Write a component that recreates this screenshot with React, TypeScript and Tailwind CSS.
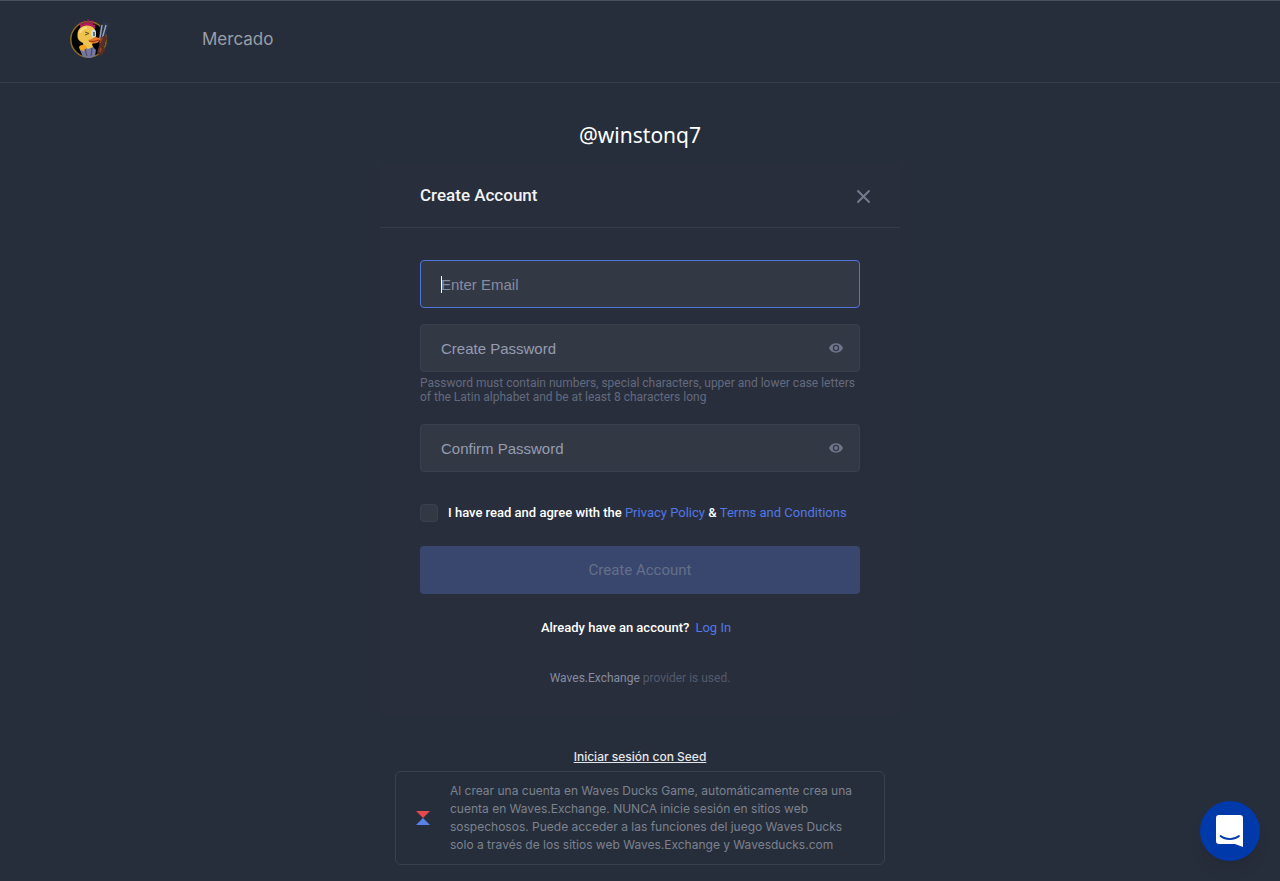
import React, { useState } from 'react';

type PasswordFieldProps = {
  label: string;
  value: string;
  onChange: (value: string) => void;
};

function DuckLogo() {
  return (
    <svg width="44" height="44" viewBox="0 0 44 44" aria-hidden="true">
      <circle cx="20.500" cy="21.500" r="17.700" fill="#020304" stroke="#8a6d20" strokeWidth="1.500" />
      <path d="M13 13L11.500 4l3.500 2.500L16 2l2.500 3.500L20 .5l2 5L25 2l.5 5 2-1-1 6z" fill="#b01c5c" />
      <path d="M32 7l3-2 1-2 2 2 4 0-2 5-4 11-5 1z" fill="#2c3547" />
      <path d="M34 7l-2 13M38 7l-4 14" stroke="#97a5bb" strokeWidth="1.400" />
      <path d="M32 20l6-3 1 4-3 6 1 6-4 5-4-3 2-7z" fill="#5c2d24" />
      <path d="M34 20l-2 5M33 30l-1 4" stroke="#94492f" strokeWidth="1.500" />
      <path d="M9.500 17c0-6 4-9.500 9.500-9.500 6 0 9 4 9 8.500 0 5-1 8-4 10l2 6-10 1-1-8c-4-2-5.500-4-5.500-7z" fill="#eec34f" />
      <path d="M12 15c1-3.500 3-5 7-5.500" fill="none" stroke="#f8dd80" strokeWidth="2" />
      <path d="M12 32l4-3 4 2 5-2 3 3-1 6-5 2-7-1z" fill="#7677a0" />
      <path d="M11 29c2-3 6-3 8 0l-3 4-4-1z" fill="#f3a51f" />
      <path d="M17 31l2 7M24 30l-1 8" stroke="#424564" strokeWidth="1" />
      <ellipse cx="25.500" cy="15.500" rx="2.400" ry="4" fill="#cfe0dc" />
      <path d="M26 14v4" stroke="#15302c" strokeWidth="1.200" />
      <path d="M17 14l4 1.500-4 1.500" fill="none" stroke="#6e5117" strokeWidth="1" />
      <path d="M20 22c4 0 5-3 8-3l5 1.500-3 4c-4 1.500-7 1.500-10-2.500z" fill="#e8742a" />
      <path d="M21 23c4 1 7 0 10-1" fill="none" stroke="#8b3813" strokeWidth="1" />
    </svg>
  );
}

function EyeIcon() {
  return (
    <svg width="14" height="10" viewBox="0 0 14 10" aria-hidden="true">
      <path
        fill="currentColor"
        fillRule="evenodd"
        d="M7 .3C3.800.300 1.100 2.200 0 5c1.100 2.800 3.800 4.700 7 4.700s5.900-1.900 7-4.700C12.900 2.200 10.200.300 7 .3zm0 7.900a3.200 3.200 0 1 1 0-6.400 3.200 3.200 0 0 1 0 6.400zM7 3.100a1.900 1.900 0 1 0 0 3.800 1.900 1.900 0 0 0 0-3.800z"
      />
    </svg>
  );
}

function PasswordField({ label, value, onChange }: PasswordFieldProps) {
  const [visible, setVisible] = useState(false);

  return (
    <div className="flex h-12 items-center rounded border border-[#3a404e] bg-[#333845] pr-4">
      <input
        type={visible ? 'text' : 'password'}
        aria-label={label}
        placeholder={label}
        value={value}
        onChange={(e) => onChange(e.target.value)}
        className="h-full min-w-0 flex-1 bg-transparent pl-5 font-['Liberation_Sans',sans-serif] text-[15px] text-white outline-none placeholder:text-[#959db1]"
      />
      <button
        type="button"
        aria-label="Show password"
        onClick={() => setVisible(!visible)}
        className="text-[#6f768b]"
      >
        <EyeIcon />
      </button>
    </div>
  );
}

export default function App() {
  const [email, setEmail] = useState('');
  const [emailFocused, setEmailFocused] = useState(true);
  const [password, setPassword] = useState('');
  const [confirm, setConfirm] = useState('');
  const [agreed, setAgreed] = useState(false);

  const canSubmit = agreed && email !== '' && password !== '' && password === confirm;

  return (
    <div className="flex min-h-screen flex-col border-t border-[#4b515d] bg-[#272e3b] font-[Roboto,sans-serif] text-white">
      <header className="flex h-[82px] items-center border-b border-[#363c49] px-17 pb-1">
        <a href="#" aria-label="Waves Ducks">
          <DuckLogo />
        </a>
        <nav className="ml-[90px]">
          <a href="#" className="font-[Inter,sans-serif] text-[17px] text-[#9a9ea7]">Mercado</a>
        </nav>
      </header>

      <main className="flex flex-col items-center pb-3">
        <p className="mt-9 font-['Noto_Sans',sans-serif] text-[21px] leading-8">@winstonq7</p>

        <section className="mt-3 w-full max-w-[520px] rounded bg-[#292e3c] pb-[30px]">
          <div className="flex h-[65px] items-center justify-between border-b border-[#363c4a] pt-0.5 pr-[30px] pl-10">
            <h1 className="text-[17px] font-medium text-[#f2f3f5]">Create Account</h1>
            <button type="button" aria-label="Close" className="text-[#747b8d]">
              <svg width="13" height="13" viewBox="0 0 13 13" aria-hidden="true">
                <path d="M1 1l11 11M12 1L1 12" stroke="currentColor" strokeWidth="1.900" strokeLinecap="round" />
              </svg>
            </button>
          </div>

          <form className="px-10 pt-8" onSubmit={(e) => e.preventDefault()}>
            <div className="relative mb-4">
              <input
                type="email"
                autoFocus
                aria-label="Enter Email"
                placeholder="Enter Email"
                value={email}
                onChange={(e) => setEmail(e.target.value)}
                onFocus={() => setEmailFocused(true)}
                onBlur={() => setEmailFocused(false)}
                className="block h-12 w-full rounded border border-[#3a404e] bg-[#333845] px-5 font-['Liberation_Sans',sans-serif] text-[15px] text-white caret-white outline-none placeholder:text-[#858da2] placeholder-shown:caret-transparent focus:border-[#5074d8]"
              />
              {emailFocused && email === '' && (
                <span className="pointer-events-none absolute top-4 left-[21px] h-[17px] w-px bg-white" />
              )}
            </div>

            <PasswordField label="Create Password" value={password} onChange={setPassword} />
            <p className="mt-1 mb-5 text-xs leading-[14px] text-[#636a7e]">
              Password must contain numbers, special characters, upper and lower case letters of the Latin alphabet and be at least 8 characters long
            </p>
            <PasswordField label="Confirm Password" value={confirm} onChange={setConfirm} />

            <div className="mt-8 flex items-center gap-[10px] text-[13px] leading-[18px]">
              <input
                id="agree"
                type="checkbox"
                checked={agreed}
                onChange={(e) => setAgreed(e.target.checked)}
                className="size-[18px] shrink-0 appearance-none rounded border border-[#3a404d] bg-[#333845] checked:bg-[#5a81ea]"
              />
              <label htmlFor="agree" className="font-medium">
                I have read and agree with the{' '}
                <a href="#" className="font-normal text-[#5078e6]">Privacy Policy</a> &amp;{' '}
                <a href="#" className="font-normal text-[#5078e6]">Terms and Conditions</a>
              </label>
            </div>

            <button
              type="submit"
              disabled={!canSubmit}
              className="mt-6 h-12 w-full rounded bg-[#5a81ea] text-[15px] disabled:bg-[#39476f] disabled:text-[#656f88]"
            >
              Create Account
            </button>
          </form>

          <p className="mt-6 pr-2 text-center text-[13px] leading-5 font-medium">
            Already have an account?
            <a href="#" className="ml-[6px] font-normal text-[#5078e6]">Log In</a>
          </p>
          <p className="mt-8 text-center text-xs leading-4 text-[#525a6c]">
            <span className="text-[#858c9f]">Waves.Exchange</span> provider is used.
          </p>
        </section>

        <div className="mt-[31px] w-full max-w-[490px] font-[Inter,sans-serif] text-xs">
          <a href="#" className="block text-center leading-5 font-medium text-[#e4e6e9] underline">
            Iniciar sesión con Seed
          </a>
          <div className="mt-1 flex items-center rounded-md border border-[#393f4c] py-[10px] pr-6 pl-5">
            <svg width="14" height="14" viewBox="0 0 14 14" className="mr-5 shrink-0" aria-hidden="true">
              <path d="M0 0h14L7 7z" fill="#e5494d" />
              <path d="M7 7l7 7H0z" fill="#5a81ea" />
            </svg>
            <p className="leading-[18px] text-[#7c828e]">
              Al crear una cuenta en Waves Ducks Game, automáticamente crea una cuenta en Waves.Exchange. NUNCA inicie sesión en sitios web sospechosos. Puede acceder a las funciones del juego Waves Ducks solo a través de los sitios web Waves.Exchange y Wavesducks.com
            </p>
          </div>
        </div>
      </main>

      <button
        type="button"
        aria-label="Open chat"
        className="fixed right-5 bottom-5 flex size-15 items-center justify-center rounded-full bg-[#0039a9] shadow-lg"
      >
        <svg width="30" height="34" viewBox="0 0 30 34" aria-hidden="true">
          <path d="M4 1h21a3 3 0 0 1 3 3v29l-8-3H4a3 3 0 0 1-3-3V4a3 3 0 0 1 3-3z" fill="#fff" />
          <path d="M5.500 22c5.500 4.200 13 4.200 18.500 0" fill="none" stroke="#0039a9" strokeWidth="1.800" strokeLinecap="round" />
        </svg>
      </button>
    </div>
  );
}
